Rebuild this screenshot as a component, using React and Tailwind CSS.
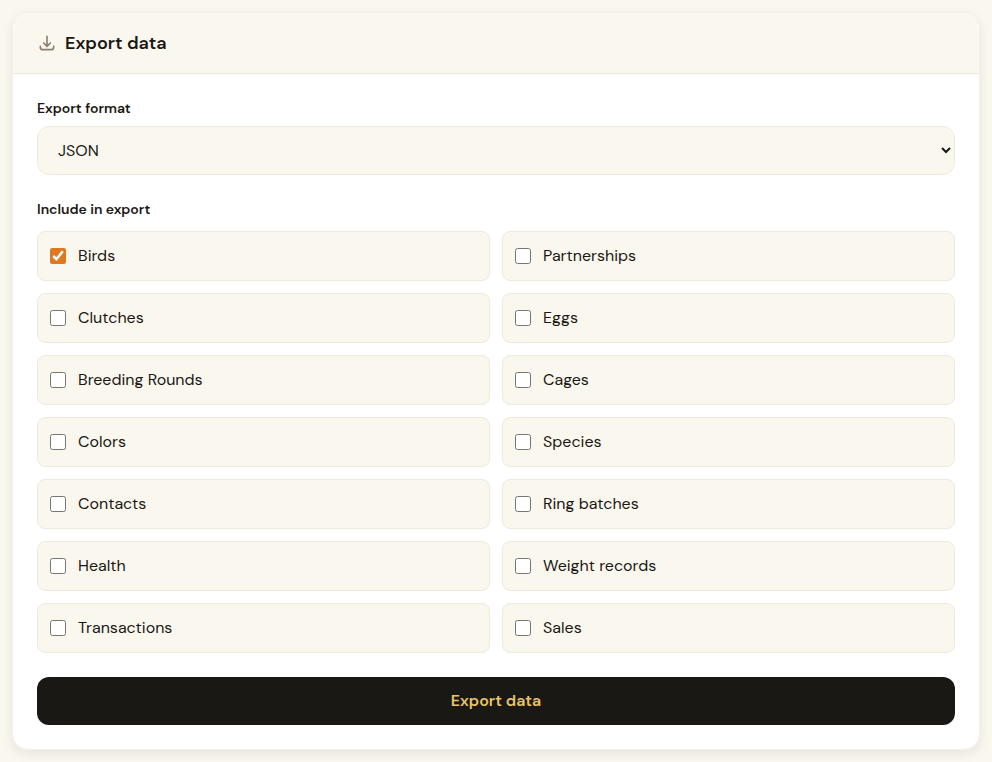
import React, { useState } from "react";

const exportOptions = [
  { id: "birds", label: "Birds" },
  { id: "partnerships", label: "Partnerships" },
  { id: "clutches", label: "Clutches" },
  { id: "eggs", label: "Eggs" },
  { id: "breedingRounds", label: "Breeding Rounds" },
  { id: "cages", label: "Cages" },
  { id: "colors", label: "Colors" },
  { id: "species", label: "Species" },
  { id: "contacts", label: "Contacts" },
  { id: "ringBatches", label: "Ring batches" },
  { id: "health", label: "Health" },
  { id: "weightRecords", label: "Weight records" },
  { id: "transactions", label: "Transactions" },
  { id: "sales", label: "Sales" },
];

const DownloadIcon = () => (
  <svg
    className="w-5 h-5 text-[#8c7f73]"
    fill="none"
    viewBox="0 0 24 24"
    stroke="currentColor"
    strokeWidth={2}
    strokeLinecap="round"
    strokeLinejoin="round"
    aria-hidden="true"
  >
    <path d="M4 16v1a3 3 0 003 3h10a3 3 0 003-3v-1m-4-4l-4 4m0 0l-4-4m4 4V4" />
  </svg>
);

const App = () => {
  const [format, setFormat] = useState("json");
  const [selected, setSelected] = useState(["birds"]);

  const toggleOption = (id) => {
    setSelected((prev) =>
      prev.includes(id) ? prev.filter((item) => item !== id) : [...prev, id]
    );
  };

  const handleSubmit = (e) => {
    e.preventDefault();

    const data = Object.fromEntries(selected.map((id) => [id, []]));
    const content =
      format === "json" ? JSON.stringify(data, null, 2) : selected.join(",");
    const url = URL.createObjectURL(new Blob([content]));
    const link = document.createElement("a");
    link.href = url;
    link.download = `export.${format}`;
    link.click();
    URL.revokeObjectURL(url);
  };

  return (
    <div className="min-h-screen bg-[#faf7ef] p-3 font-['DM_Sans',Inter,sans-serif] text-[#1a1814]">
      <section className="bg-white border border-[#f3f0e7] rounded-2xl shadow-[0_4px_12px_rgba(26,24,20,0.08)] overflow-hidden">
        <div className="flex items-center gap-2 px-6 py-4 bg-[#faf7ef] border-b border-[#ebe8d8]">
          <DownloadIcon />
          <h2 className="text-lg leading-7 font-semibold">Export data</h2>
        </div>

        <form className="p-6" onSubmit={handleSubmit}>
          {/* Format */}
          <div className="mb-6">
            <label
              className="block text-sm font-semibold mb-2"
              htmlFor="format"
            >
              Export format
            </label>
            <select
              id="format"
              className="block w-full h-[49px] px-4 bg-[#faf7ef] border border-[#edebdf] rounded-xl focus:outline-none"
              value={format}
              onChange={(e) => setFormat(e.target.value)}
            >
              <option value="json">JSON</option>
              <option value="csv">CSV</option>
            </select>
          </div>

          {/* Record types */}
          <fieldset className="mb-6">
            <legend className="block text-sm font-semibold mb-3">
              Include in export
            </legend>
            <div className="grid grid-cols-2 gap-3">
              {exportOptions.map((option) => (
                <label
                  key={option.id}
                  htmlFor={option.id}
                  className="flex items-center gap-3 p-3 bg-[#faf7ef] border border-[#edebdf] rounded-lg cursor-pointer"
                >
                  <input
                    id={option.id}
                    type="checkbox"
                    className="w-4 h-4 accent-[#e07820]"
                    checked={selected.includes(option.id)}
                    onChange={() => toggleOption(option.id)}
                  />
                  <span>{option.label}</span>
                </label>
              ))}
            </div>
          </fieldset>

          <button
            type="submit"
            className="w-full py-3 bg-[#1a1814] text-[#e8c468] font-semibold rounded-xl cursor-pointer"
          >
            Export data
          </button>
        </form>
      </section>
    </div>
  );
};

export default App;
